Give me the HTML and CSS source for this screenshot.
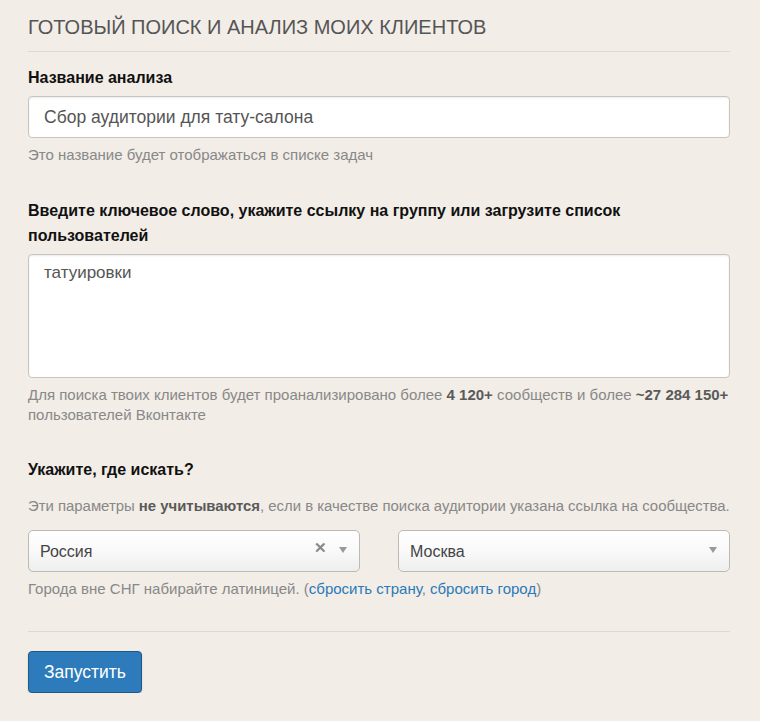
FILE: index.html
```html
<!DOCTYPE html>
<html lang="ru">
<head>
<meta charset="utf-8">
<link rel="stylesheet" href="styles.css">
</head>
<body>
<div class="page">
  <h1 class="title">ГОТОВЫЙ ПОИСК И АНАЛИЗ МОИХ КЛИЕНТОВ</h1>
  <div class="field f-name">
    <label class="label">Название анализа</label>
    <div class="input">Сбор аудитории для тату-салона</div>
    <p class="hint">Это название будет отображаться в списке задач</p>
  </div>
  <div class="field f-query">
    <label class="label">Введите ключевое слово, укажите ссылку на группу или загрузите список пользователей</label>
    <div class="textarea">татуировки</div>
    <p class="hint">Для поиска твоих клиентов будет проанализировано более <b>4 120+</b> сообществ и более <b>~27 284 150+</b> пользователей Вконтакте</p>
  </div>
  <div class="field f-geo">
    <label class="label">Укажите, где искать?</label>
    <p class="hint hint-top">Эти параметры <b>не учитываются</b>, если в качестве поиска аудитории указана ссылка на сообщества.</p>
    <div class="selects">
      <div class="select">
        <span class="sel-text">Россия</span>
        <span class="sel-clear">✕</span>
        <span class="sel-arrow"></span>
      </div>
      <div class="select">
        <span class="sel-text">Москва</span>
        <span class="sel-arrow"></span>
      </div>
    </div>
    <p class="hint">Города вне СНГ набирайте латиницей. (<a href="#">сбросить страну</a>, <a href="#">сбросить город</a>)</p>
  </div>
  <div class="actions">
    <button class="btn">Запустить</button>
  </div>
</div>
</body>
</html>
```

FILE: styles.css
```css
html, body {
  margin: 0;
  padding: 0;
  background: #f2ede7;
}
body {
  font-family: "Liberation Sans", Arial, sans-serif;
  color: #333;
}
*, *::before, *::after { box-sizing: border-box; }
.page {
  padding: 13px 30px 0 28px;
}
.title {
  margin: 0;
  font-weight: normal;
  font-size: 20px;
  line-height: 28px;
  color: #555;
  padding-bottom: 10px;
  border-bottom: 1px solid #ddd8d2;
}
.field {
  display: flex;
  flex-direction: column;
}
.f-name { margin-top: 13px; }
.f-query { margin-top: 33px; }
.f-geo { margin-top: 32px; }
.label {
  font-weight: bold;
  font-size: 16px;
  line-height: 25px;
  color: #111;
  margin-bottom: 6px;
}
.input, .textarea {
  background: #fff;
  border: 1px solid #c8c4bf;
  border-radius: 4px;
  box-shadow: inset 0 1px 2px rgba(0,0,0,0.08);
  color: #555;
  padding: 0 15px;
}
.input {
  height: 42px;
  line-height: 40px;
  font-size: 17.5px;
}
.textarea {
  height: 124px;
  padding-top: 6px;
  line-height: 24px;
  font-size: 17px;
}
.hint {
  margin: 7px 0 0;
  font-size: 15px;
  line-height: 20px;
  color: #888;
}
.hint b { color: #5a5a5a; }
.hint-top {
  margin: 8px 0 14px;
  white-space: nowrap;
  font-size: 14.9px;
}
.hint a { color: #2a7ab8; text-decoration: none; }
.selects {
  display: grid;
  grid-template-columns: 1fr 1fr;
  column-gap: 38px;
}
.select {
  display: flex;
  align-items: center;
  height: 42px;
  border: 1px solid #bdb9b4;
  border-radius: 5px;
  background: linear-gradient(#ffffff 0%, #f9f9f9 50%, #eeeeee 100%);
  padding: 0 12px 0 11px;
  font-size: 16px;
  color: #444;
}
.sel-text { flex: 1; padding-top: 1px; }
.sel-clear {
  font-size: 15px;
  font-weight: bold;
  color: #888;
  margin-right: 12px;
  margin-top: -6px;
}
.sel-arrow {
  width: 0;
  height: 0;
  border-left: 4px solid transparent;
  border-right: 4px solid transparent;
  border-top: 6px solid #999;
  margin-top: -2px;
}
.actions {
  margin-top: 32px;
  border-top: 1px solid #ddd8d2;
  padding-top: 19px;
}
.btn {
  font-family: "Liberation Sans", Arial, sans-serif;
  font-size: 17.5px;
  color: #fff;
  background: #2d7bbb;
  border: 1px solid #1d5a8c;
  border-radius: 4px;
  height: 42px;
  width: 114px;
  padding: 0;
  box-shadow: 0 1px 2px rgba(0,0,0,0.15);
}
```
